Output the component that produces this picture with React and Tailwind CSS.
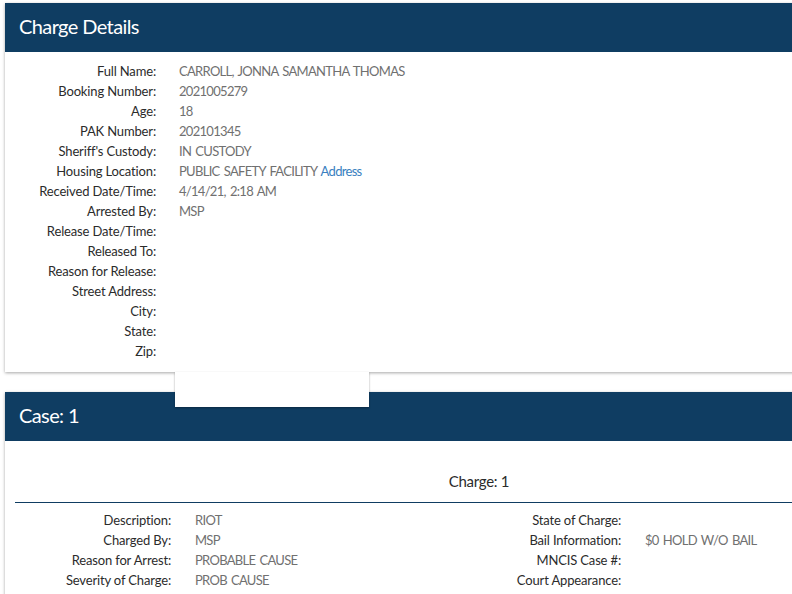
import React from "react";

const font = { fontFamily: "Lato, 'Open Sans', Arial, sans-serif" };

const details = [
  ["Full Name:", "CARROLL, JONNA SAMANTHA THOMAS"],
  ["Booking Number:", "2021005279"],
  ["Age:", "18"],
  ["PAK Number:", "202101345"],
  ["Sheriff's Custody:", "IN CUSTODY"],
  ["Housing Location:", "PUBLIC SAFETY FACILITY", true],
  ["Received Date/Time:", "4/14/21, 2:18 AM"],
  ["Arrested By:", "MSP"],
  ["Release Date/Time:", ""],
  ["Released To:", ""],
  ["Reason for Release:", ""],
  ["Street Address:", ""],
  ["City:", ""],
  ["State:", ""],
  ["Zip:", ""],
];

const leftCase = [
  ["Description:", "RIOT"],
  ["Charged By:", "MSP"],
  ["Reason for Arrest:", "PROBABLE CAUSE"],
  ["Severity of Charge:", "PROB CAUSE"],
];
const rightCase = [
  ["State of Charge:", ""],
  ["Bail Information:", "$0 HOLD W/O BAIL"],
  ["MNCIS Case #:", ""],
  ["Court Appearance:", ""],
];

function Row({ label, value, link, labelW, gap }) {
  return (
    <div className="flex h-[20px] items-center text-[13px] leading-[20px]">
      <div className={`${labelW} shrink-0 text-right text-[#2b2b2b] tracking-[-0.15px]`}>{label}</div>
      <div className={`${gap} text-[#707070] tracking-[-0.7px] [word-spacing:1.5px] whitespace-nowrap`}>
        {value}
        {link && <span className="text-[#3a7fc0]"> Address</span>}
      </div>
    </div>
  );
}

export default function App() {
  return (
    <div className="relative w-[792px] h-[594px] overflow-hidden bg-white pt-[3px] pl-[5px]" style={font}>
      <div className="w-[948px] bg-white shadow-[0_1px_3px_rgba(0,0,0,0.35)]">
        <div className="h-[49px] bg-[#0f3d62] flex items-center pl-[14px] pb-[3px] text-white text-[20px] tracking-[-0.6px] font-normal">
          Charge Details
        </div>
        <div className="pt-[9px] pb-[11px]">
          {details.map(([l, v, link]) => (
            <Row key={l} label={l} value={v} link={link} labelW="w-[151px]" gap="pl-[23px]" />
          ))}
        </div>
      </div>

      <div className="absolute left-[175px] top-[372px] w-[194px] h-[35px] bg-white shadow-[0_1px_2px_rgba(0,0,0,0.35)] z-10" />

      <div className="mt-[20px] w-[948px] h-[300px] bg-white shadow-[0_1px_3px_rgba(0,0,0,0.35)]">
        <div className="h-[49px] bg-[#0f3d62] flex items-center pl-[14px] pb-[3px] text-white text-[20px] tracking-[-0.6px] font-normal">
          Case: 1
        </div>
        <div className="px-[10px]">
          <div className="pt-[29px] pb-[10px] text-center text-[15px] leading-[22px] tracking-[-0.3px] text-[#2b2b2b]">Charge: 1</div>
          <div className="h-px bg-[#0f3d62]" />
          <div className="flex pt-[7px]">
            <div className="w-[450px]">
              {leftCase.map(([l, v]) => (
                <Row key={l} label={l} value={v} labelW="w-[156px]" gap="pl-[24px]" />
              ))}
            </div>
            <div>
              {rightCase.map(([l, v]) => (
                <Row key={l} label={l} value={v} labelW="w-[156px]" gap="pl-[24px]" />
              ))}
            </div>
          </div>
        </div>
      </div>
    </div>
  );
}
